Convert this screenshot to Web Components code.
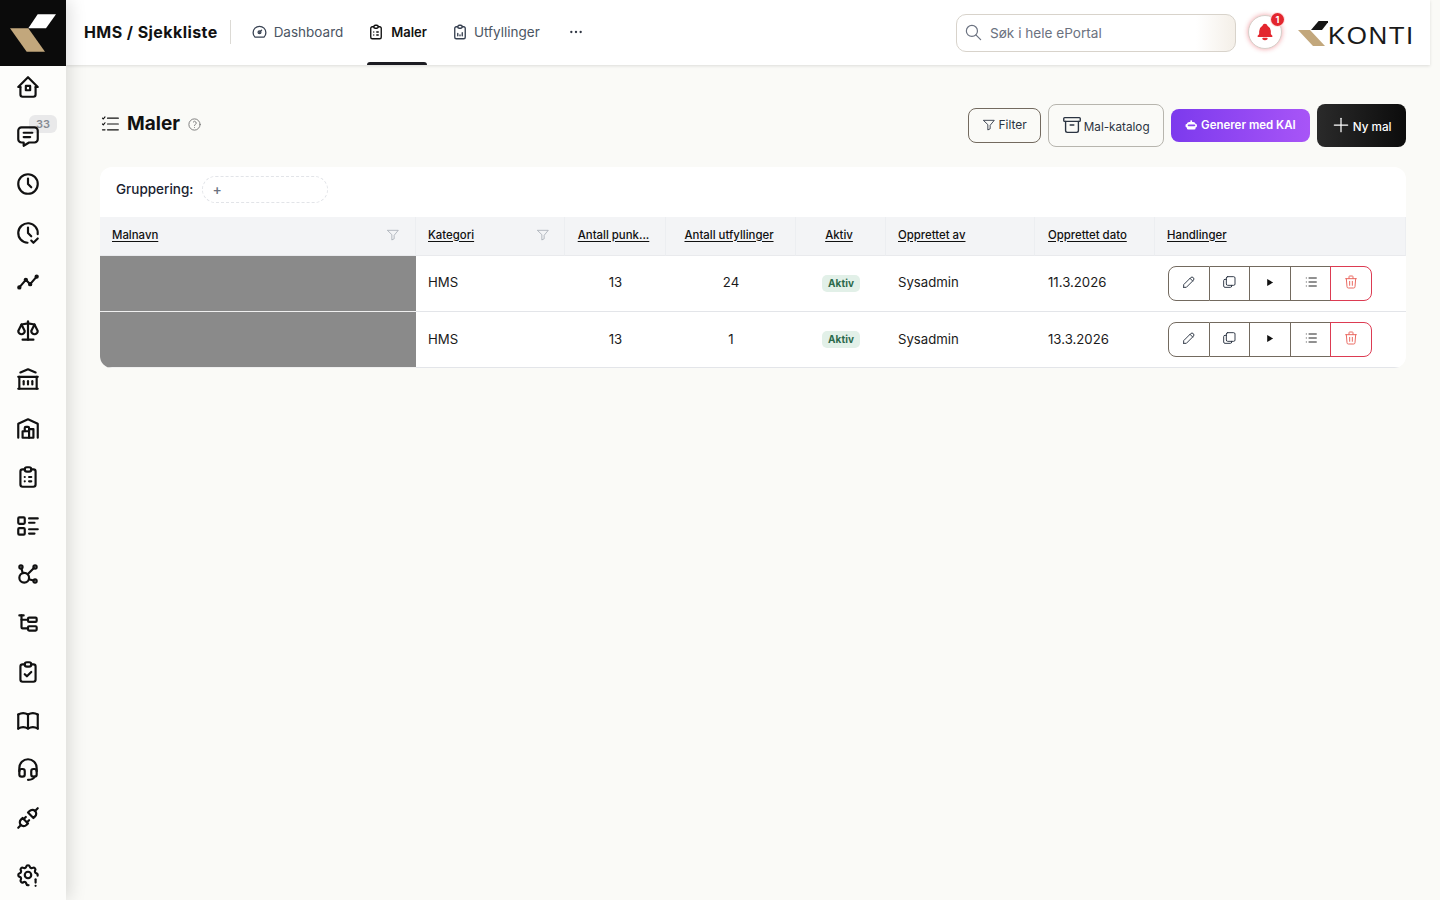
<!DOCTYPE html>
<html lang="no">
<head>
<meta charset="utf-8">
<title>Maler</title>
<style>
  html, body { margin: 0; height: 100%; }
  body { font-family: Inter, "Liberation Sans", sans-serif; background: #fafaf7; color: #111; overflow: hidden; }
  #app { display: flex; height: 900px; }
  #main { flex: 1; min-width: 0; display: flex; flex-direction: column; }
  #content { padding: 38px 34px 0; display: flex; flex-direction: column; }
</style>
</head>
<body>
<div id="app">
  <k-sidebar></k-sidebar>
  <div id="main">
    <k-topbar></k-topbar>
    <div id="content">
      <k-page-header></k-page-header>
      <k-table></k-table>
    </div>
  </div>
</div>

<script>
const clip = '<path d="M9 5h-2a2 2 0 0 0 -2 2v12a2 2 0 0 0 2 2h10a2 2 0 0 0 2 -2v-12a2 2 0 0 0 -2 -2h-2"/><path d="M9 5a2 2 0 0 1 2 -2h2a2 2 0 0 1 2 2a2 2 0 0 1 -2 2h-2a2 2 0 0 1 -2 -2z"/>';
const ICONS = {
  home: '<path d="M5 12h-2l9 -9l9 9h-2"/><path d="M5 12v7a2 2 0 0 0 2 2h10a2 2 0 0 0 2 -2v-7"/><rect x="10" y="11" width="4" height="4"/>',
  message: '<path d="M18 4a3 3 0 0 1 3 3v8a3 3 0 0 1 -3 3h-5l-5 3v-3h-2a3 3 0 0 1 -3 -3v-8a3 3 0 0 1 3 -3h12z"/><path d="M8 9h8"/><path d="M8 13h6"/>',
  clock: '<circle cx="12" cy="12" r="9"/><path d="M12 7v5l3 3"/>',
  clockcheck: '<path d="M20.942 13.021a9 9 0 1 0 -9.407 7.967"/><path d="M12 7v5l3 3"/><path d="M15 19l2 2l4 -4"/>',
  timeline: '<path d="M4 17l6 -7l4 4l6 -7"/><circle cx="4" cy="17" r="1"/><circle cx="10" cy="10" r="1"/><circle cx="14" cy="14" r="1"/><circle cx="20" cy="7" r="1"/>',
  scale: '<path d="M7 20h10"/><path d="M6 6l6 -1l6 1"/><path d="M12 3v17"/><path d="M9 12l-3 -6l-3 6a3 3 0 0 0 6 0"/><path d="M21 12l-3 -6l-3 6a3 3 0 0 0 6 0"/>',
  bank: '<path d="M3 21h18"/><path d="M3 10h18"/><path d="M5 6l7 -3l7 3"/><path d="M4 10v11"/><path d="M20 10v11"/><path d="M8 14v3"/><path d="M12 14v3"/><path d="M16 14v3"/>',
  warehouse: '<path d="M3 21v-13l9 -4l9 4v13"/><path d="M13 13h4v8h-10v-6h6"/><path d="M13 21v-9a1 1 0 0 0 -1 -1h-2a1 1 0 0 0 -1 1v3"/>',
  cliplist: clip + '<path d="M9 12h.01"/><path d="M13 12h2"/><path d="M9 16h.01"/><path d="M13 16h2"/>',
  clipcheck: clip + '<path d="M9 14l2 2l4 -4"/>',
  clipdata: clip + '<path d="M9 17v-3"/><path d="M12 17v-1"/><path d="M15 17v-4"/>',
  details: '<path d="M13 5h8"/><path d="M13 9h5"/><path d="M13 15h8"/><path d="M13 19h5"/><rect x="3" y="4" width="6" height="6" rx="1"/><rect x="3" y="14" width="6" height="6" rx="1"/>',
  affiliate: '<path d="M5.931 6.936l1.275 4.249m5.607 5.609l4.251 1.275"/><path d="M11.683 12.317l5.759 -5.759"/><circle cx="5.5" cy="5.5" r="1.5"/><circle cx="18.5" cy="5.5" r="1.5"/><circle cx="18.5" cy="18.5" r="1.5"/><circle cx="8.5" cy="15.5" r="4.5"/>',
  subtask: '<path d="M6 9h6"/><path d="M4 5h4"/><path d="M6 5v11a1 1 0 0 0 1 1h5"/><rect x="12" y="7" width="8" height="4" rx="1"/><rect x="12" y="15" width="8" height="4" rx="1"/>',
  book: '<path d="M3 19a9 9 0 0 1 9 0a9 9 0 0 1 9 0"/><path d="M3 6a9 9 0 0 1 9 0a9 9 0 0 1 9 0"/><path d="M3 6v13"/><path d="M12 6v13"/><path d="M21 6v13"/>',
  headset: '<path d="M4 14v-3a8 8 0 1 1 16 0v3"/><path d="M18 19c0 1.657 -2.686 3 -6 3"/><path d="M4 14a2 2 0 0 1 2 -2h1a2 2 0 0 1 2 2v3a2 2 0 0 1 -2 2h-1a2 2 0 0 1 -2 -2v-3z"/><path d="M15 14a2 2 0 0 1 2 -2h1a2 2 0 0 1 2 2v3a2 2 0 0 1 -2 2h-1a2 2 0 0 1 -2 -2v-3z"/>',
  plug: '<path d="M7 12l5 5l-1.5 1.5a3.536 3.536 0 1 1 -5 -5l1.5 -1.5z"/><path d="M17 12l-5 -5l1.5 -1.5a3.536 3.536 0 1 1 5 5l-1.5 1.5z"/><path d="M3 21l2.5 -2.5"/><path d="M18.5 5.5l2.5 -2.5"/><path d="M10 11l-2 2"/><path d="M13 14l-2 2"/>',
  settings: '<path d="M12.500 21.400c-.8 .2 -1.800 -.2 -2.175 -1.683a1.724 1.724 0 0 0 -2.573 -1.066c-1.543 .94 -3.31 -.826 -2.37 -2.37a1.724 1.724 0 0 0 -1.065 -2.572c-1.756 -.426 -1.756 -2.924 0 -3.35a1.724 1.724 0 0 0 1.066 -2.573c-.94 -1.543 .826 -3.31 2.37 -2.37c1 .608 2.296 .07 2.572 -1.065c.426 -1.756 2.924 -1.756 3.35 0a1.724 1.724 0 0 0 2.573 1.066c1.543 -.94 3.31 .826 2.37 2.37a1.724 1.724 0 0 0 1.065 2.572c1 .3 1.400 1.100 1.200 2.200"/><circle cx="12" cy="12" r="3"/><path d="M19 16v3"/><path d="M19 22v.01"/>',
  gauge: '<path d="M5.6 20a9 9 0 1 1 12.8 0z"/><path d="M12 13l3 -3"/><circle cx="12" cy="13" r="2"/>',
  dots: '<path d="M5 12h.01"/><path d="M12 12h.01"/><path d="M19 12h.01"/>',
  search: '<circle cx="10" cy="10" r="7"/><path d="M21 21l-6 -6"/>',
  checklist: '<path d="M9 5h13"/><path d="M9 12h13"/><path d="M9 19h13"/><path d="M3 5l1 1l2 -2.500"/><path d="M3 12l1 1l2 -2.500"/><path d="M3 19h3"/>',
  help: '<circle cx="12" cy="12" r="9"/><path d="M12 17v.01"/><path d="M12 13.500a1.500 1.500 0 0 1 1 -1.500a2.600 2.600 0 1 0 -3 -4"/>',
  filter: '<path d="M3 4h18l-7 8.500v6l-4 2v-8.500z"/>',
  archive: '<rect x="3" y="4" width="18" height="4" rx="1"/><path d="M5 8v10a2 2 0 0 0 2 2h10a2 2 0 0 0 2 -2v-10"/><path d="M10 12h4"/>',
  plus: '<path d="M12 4v16"/><path d="M4 12h16"/>',
  pencil: '<path d="M4 20h4l10.500 -10.500a2.828 2.828 0 1 0 -4 -4l-10.500 10.500v4"/><path d="M13.500 6.500l4 4"/>',
  copy: '<rect x="8" y="4" width="13" height="13" rx="2"/><path d="M16 17v1a2 2 0 0 1 -2 2h-8a2 2 0 0 1 -2 -2v-8a2 2 0 0 1 2 -2h2"/>',
  list: '<path d="M9 6h11"/><path d="M9 12h11"/><path d="M9 18h11"/><path d="M5 6v.01"/><path d="M5 12v.01"/><path d="M5 18v.01"/>',
  trash: '<path d="M4 7h16"/><path d="M10 11v6"/><path d="M14 11v6"/><path d="M5 7l1 12a2 2 0 0 0 2 2h8a2 2 0 0 0 2 -2l1 -12"/><path d="M9 7v-3a1 1 0 0 1 1 -1h4a1 1 0 0 1 1 1v3"/>',
  play: '<path d="M7 4.500v15l13 -7.500z" fill="currentColor" stroke="none"/>',
  bell: '<path fill="currentColor" stroke="none" d="M14.235 19c.865 0 1.322 1.024 .745 1.668a3.992 3.992 0 0 1 -2.98 1.332a3.992 3.992 0 0 1 -2.98 -1.332c-.552 -.616 -.158 -1.579 .634 -1.661l.11 -.006h4.471z"/><path fill="currentColor" stroke="none" d="M12 2c1.358 0 2.506 .903 2.875 2.141l.046 .171l.008 .043a8.013 8.013 0 0 1 4.024 6.069l.028 .287l.019 .289v2.931l.021 .136a3 3 0 0 0 1.143 1.847l.167 .117l.162 .099c.86 .487 .56 1.766 -.377 1.864l-.116 .006h-16c-1.028 0 -1.387 -1.364 -.493 -1.87a3 3 0 0 0 1.472 -2.063l.021 -.143l.001 -2.97a8 8 0 0 1 3.821 -6.454l.248 -.146l.01 -.043a3.003 3.003 0 0 1 2.562 -2.29l.182 -.017l.176 -.004z"/>',
  robot: '<path fill="currentColor" stroke="none" d="M12 2.500a1.300 1.300 0 0 1 1 2.100v.900h2a5 5 0 0 1 4.800 3.500h.2a2 2 0 0 1 2 2v2.500a2 2 0 0 1 -2 2h-.5v1.500a2.500 2.500 0 0 1 -2.500 2.500h-11a2.500 2.500 0 0 1 -2.500 -2.500v-1.500h-.5a2 2 0 0 1 -2 -2v-2.500a2 2 0 0 1 2 -2h.2a5 5 0 0 1 4.800 -3.500h2v-.9a1.300 1.300 0 0 1 1 -2.100z"/><rect x="5" y="10" width="14" height="3.500" rx="1.750" fill="#8a45f0" stroke="none"/>'
};

class KIcon extends HTMLElement {
  connectedCallback() {
    const size = this.getAttribute('size') || 24;
    const sw = this.getAttribute('stroke') || 2;
    this.attachShadow({ mode: 'open' }).innerHTML = `
      <style>
        :host { display: inline-flex; flex: none; width: ${size}px; height: ${size}px; }
        svg { display: block; width: 100%; height: 100%; }
      </style>
      <svg viewBox="0 0 24 24" fill="none" stroke="currentColor" stroke-width="${sw}" stroke-linecap="round" stroke-linejoin="round">${ICONS[this.getAttribute('name')] || ''}</svg>`;
  }
}
customElements.define('k-icon', KIcon);

class KSidebar extends HTMLElement {
  connectedCallback() {
    const names = ['home','message','clock','clockcheck','timeline','scale','bank','warehouse','cliplist','details','affiliate','subtask','clipcheck','book','headset','plug'];
    this.attachShadow({ mode: 'open' }).innerHTML = `
      <style>
        :host { display: flex; flex-direction: column; flex: none; width: 66px; height: 900px; background: #fdfdfb; box-shadow: 4px 0 16px rgba(0,0,0,.13); position: relative; z-index: 3; }
        .logo { height: 66px; background: #0b0b0b; flex: none; }
        .logo svg { display: block; }
        nav { display: flex; flex-direction: column; margin-top: -3.4px; flex: 1; }
        .item { height: 48.75px; flex: none; display: flex; align-items: center; justify-content: center; position: relative; color: #111; padding-right: 10px; box-sizing: border-box; }
        .badge { position: absolute; left: 29px; top: 3.5px; width: 28px; height: 18px; border-radius: 6px; background: #e9e9ea; color: #868b93; font-size: 11px; font-weight: 600; display: flex; align-items: center; justify-content: center; }
        .item k-icon { position: relative; z-index: 1; }
        .last { margin-top: auto; margin-bottom: 1px; }
      </style>
      <div class="logo"><svg width="66" height="66"><polygon points="37.700,14.300 56,14.300 46,28.300 28.300,28.300" fill="#fff"/><polygon points="10,28.300 28.300,28.300 45,51.700 26.700,51.700" fill="#c2a77c"/></svg></div>
      <nav>
        ${names.map((n, i) => `<div class="item">${i == 1 ? '<span class="badge">33</span>' : ''}<k-icon name="${n}" size="26"></k-icon></div>`).join('')}
        <div class="item last"><k-icon name="settings" size="26"></k-icon></div>
      </nav>`;
  }
}
customElements.define('k-sidebar', KSidebar);

class KTopbar extends HTMLElement {
  connectedCallback() {
    this.attachShadow({ mode: 'open' }).innerHTML = `
      <style>
        :host { display: flex; align-items: center; flex: none; height: 65px; margin-right: 10px; background: #fff; box-shadow: 0 1px 3px rgba(0,0,0,.12); padding-left: 18px; position: relative; z-index: 2; box-sizing: border-box; }
        h1 { margin: 0 0 2px; font-size: 16px; font-weight: 700; letter-spacing: .42px; white-space: nowrap; }
        .sep { width: 1px; height: 24px; background: #dcdad5; margin: 0 20px 2px 12px; }
        .nav { display: flex; align-self: stretch; align-items: center; }
        .tab { height: 100%; display: flex; align-items: center; gap: 6px; font-size: 13.5px; color: #4b5563; position: relative; margin-right: 24px; box-sizing: border-box; white-space: nowrap; padding-bottom: 2px; }
        .tab.data { gap: 5px; }
        .tab.on { color: #111; font-weight: 600; font-size: 13px; }
        .tab.on::after { content: ""; position: absolute; left: 0; right: 0; bottom: 0; height: 3px; background: #1c1c22; border-radius: 3px 3px 0 0; }
        .tab k-icon { color: #374151; }
        .tab.on k-icon { color: #111; }
        .more { color: #2f3542; margin: 0 0 2px 4px; }
        .right { margin-left: auto; display: flex; align-items: center; }
        .search { width: 280px; height: 38px; box-sizing: border-box; border: 1px solid #d8d3cb; border-radius: 10px; background: linear-gradient(90deg, #fff 86%, #f4efe8 100%); display: flex; align-items: center; padding-left: 7px; gap: 7px; color: #6b7280; font-size: 13.6px; }
        .bell { width: 34px; height: 34px; margin: 0 0 2px 12px; border-radius: 50%; background: #fff; border: 1px solid #d5d0ca; box-sizing: border-box; box-shadow: 0 0 5px rgba(227,40,50,.45); display: flex; align-items: center; justify-content: center; color: #e3262e; position: relative; }
        .dot { position: absolute; left: 22px; top: -3px; width: 13px; height: 13px; border-radius: 50%; background: #e3262e; color: #fff; font-size: 9px; font-weight: 700; display: flex; align-items: center; justify-content: center; box-shadow: 0 0 0 1px #fde0e0; }
        .brand { display: flex; align-items: center; margin-left: 16px; margin-right: 17px; height: 40px; }
        .brand svg { display: block; flex: none; }
        .brand span { font-family: "Liberation Sans", sans-serif; font-size: 24px; line-height: 24px; letter-spacing: 1.4px; color: #1a1a1a; margin: 7px 0 0 0; display: inline-block; transform: scaleX(1.08); transform-origin: left center; width: 85px; }
      </style>
      <h1>HMS / Sjekkliste</h1>
      <div class="sep"></div>
      <div class="nav">
        <div class="tab"><k-icon name="gauge" size="17" stroke="1.800"></k-icon>Dashboard</div>
        <div class="tab on"><k-icon name="cliplist" size="18" stroke="1.800"></k-icon>Maler</div>
        <div class="tab data"><k-icon name="clipdata" size="18" stroke="1.800"></k-icon>Utfyllinger</div>
        <k-icon class="more" name="dots" size="16" stroke="3.500"></k-icon>
      </div>
      <div class="right">
        <div class="search"><k-icon name="search" size="19" stroke="1.500"></k-icon><span>Søk i hele ePortal</span></div>
        <div class="bell"><k-icon name="bell" size="20"></k-icon><span class="dot">1</span></div>
        <div class="brand">
          <svg width="30" height="28" viewBox="0 0 30 28"><polygon points="13,11 20.600,2 31,2 24,11" fill="#161616"/><polygon points="0,11 12,11 27,27 15,27" fill="#c2a77c"/></svg>
          <span>KONTI</span>
        </div>
      </div>`;
  }
}
customElements.define('k-topbar', KTopbar);

class KBtn extends HTMLElement {
  connectedCallback() {
    this.attachShadow({ mode: 'open' }).innerHTML = `
      <style>
        :host { display: inline-flex; align-items: center; justify-content: center; box-sizing: border-box; border-radius: 8px; font-size: 12px; white-space: nowrap; }
        :host([kind=outline]) { height: 35px; border: 1px solid #736a5f; color: #2b3442; padding: 0 13px; gap: 2px; }
        :host([kind=soft]) { height: 43px; border: 1px solid #b7b5ae; color: #2b3442; padding: 0 13px 0 12px; gap: 1px; font-size: 11.7px; }
        :host([kind=ai]) { height: 33px; background: linear-gradient(90deg, #7c3aed, #a855f7); color: #fff; font-weight: 600; padding: 0 14.500px; gap: 3px; font-size: 11.5px; }
        :host([kind=dark]) { height: 43px; background: linear-gradient(90deg, #2a2a2a, #0c0c0c); color: #fff; font-weight: 500; padding: 0 14.500px 0 13.500px; gap: 2px; font-size: 11.7px; }
        .lab { display: inline-block; }
        :host([kind=outline]) .lab, :host([kind=outline]) ::slotted(k-icon) { margin-bottom: 1px; }
        :host([kind=soft]) .lab, :host([kind=dark]) .lab { padding-top: 4px; }
      </style>
      <slot name="icon"></slot><span class="lab"><slot></slot></span>`;
  }
}
customElements.define('k-btn', KBtn);

class KPageHeader extends HTMLElement {
  connectedCallback() {
    this.attachShadow({ mode: 'open' }).innerHTML = `
      <style>
        :host { display: flex; align-items: center; height: 44px; margin-bottom: 20px; }
        .title { display: flex; align-items: center; margin-bottom: 2px; }
        h2 { margin: 0 7px; font-size: 19px; line-height: 24px; font-weight: 700; color: #111; }
        .help { color: #777; }
        .actions { margin-left: auto; display: flex; align-items: center; gap: 7px; }
      </style>
      <div class="title">
        <k-icon name="checklist" size="20" stroke="1.400"></k-icon>
        <h2>Maler</h2>
        <k-icon class="help" name="help" size="15" stroke="1.500"></k-icon>
      </div>
      <div class="actions">
        <k-btn kind="outline"><k-icon slot="icon" name="filter" size="14" stroke="1.500"></k-icon>Filter</k-btn>
        <k-btn kind="soft"><k-icon slot="icon" name="archive" size="22" stroke="1.500"></k-icon>Mal-katalog</k-btn>
        <k-btn kind="ai"><k-icon slot="icon" name="robot" size="13"></k-icon>Generer med KAI</k-btn>
        <k-btn kind="dark"><k-icon slot="icon" name="plus" size="20" stroke="1.500"></k-icon>Ny mal</k-btn>
      </div>`;
  }
}
customElements.define('k-page-header', KPageHeader);

class KActions extends HTMLElement {
  connectedCallback() {
    const b = ['pencil', 'copy', 'play', 'list'];
    this.attachShadow({ mode: 'open' }).innerHTML = `
      <style>
        :host { display: flex; height: 35px; width: 204px; box-sizing: border-box; }
        span { flex: 1; display: flex; align-items: center; justify-content: center; border: 1px solid #736a5f; border-left: 0; color: #27303f; padding-bottom: 3px; box-sizing: border-box; }
        span:first-of-type { border-left: 1px solid #736a5f; border-radius: 8px 0 0 8px; }
        span.del { border: 1px solid #dc3b52; border-radius: 0 8px 8px 0; color: #ea6a62; margin-left: -1px; }
        .play, .list { color: #111; }
      </style>
      ${b.map(n => `<span class="${n}"><k-icon name="${n}" size="${n == 'play' ? 11 : 16}" stroke="1.400"></k-icon></span>`).join('')}
      <span class="del"><k-icon name="trash" size="16" stroke="1.500"></k-icon></span>`;
  }
}
customElements.define('k-actions', KActions);

class KTable extends HTMLElement {
  connectedCallback() {
    const heads = [
      ['Malnavn', '', 1], ['Kategori', 'kat', 1], ['Antall punk...', 'c'], ['Antall utfyllinger', 'c'],
      ['Aktiv', 'c'], ['Opprettet av', ''], ['Opprettet dato', ''], ['Handlinger', '']
    ];
    const rows = [
      ['HMS', '13', '24', 'Sysadmin', '11.3.2026'],
      ['HMS', '13', '1', 'Sysadmin', '13.3.2026']
    ];
    this.attachShadow({ mode: 'open' }).innerHTML = `
      <style>
        :host { display: block; background: #fff; border-radius: 12px; overflow: hidden; font-size: 13.2px; color: #1a1a1a; }
        .group { height: 50px; display: flex; align-items: center; padding-left: 16px; gap: 9px; font-size: 13.5px; font-weight: 500; color: #1a2230; box-sizing: border-box; padding-bottom: 5px; }
        .group b { font-weight: 500; margin-bottom: 2px; }
        .drop { width: 126px; height: 27px; box-sizing: border-box; border: 1px dashed #e2e4e8; border-radius: 14px; display: flex; align-items: center; padding: 0 0 1px 9px; color: #6b7280; font-size: 14px; }
        .grid { display: grid; grid-template-columns: 316px 149px 101px 130px 90px 149px 120px 1fr; }
        .th { height: 39px; background: #f3f4f6; display: flex; align-items: center; padding: 0 12px 3px; font-size: 11.4px; font-weight: 500; color: #111; border-right: 1px solid #eceef1; border-bottom: 1px solid #e9eaed; box-sizing: border-box; position: relative; }
        .th:last-child { border-right: 0; padding-left: 15px; }
        .th:nth-child(7) { padding-left: 13px; }
        .th u { text-underline-offset: 2px; white-space: nowrap; }
        .th.c { justify-content: center; padding-right: 15px; }
        .th k-icon { margin-left: auto; margin-right: 3px; color: #9aa1ab; }
        .th.kat k-icon { margin-right: 2px; }
        .td { height: 56px; display: flex; align-items: center; padding: 0 12px 3px; border-bottom: 1px solid #e3e5e9; box-sizing: border-box; white-space: nowrap; }
        .td.second { padding-bottom: 2px; }
        .td.c { justify-content: center; }
        .td.p { padding-left: 13px; }
        .td.flat { padding-bottom: 0; }
        .blk { padding: 0; background: #8a8a8a; border-bottom: 1px solid #f0f0f0; }
        .pill { height: 17px; width: 38px; border-radius: 5px; background: #e2f0e8; color: #2c6a4c; font-size: 10px; font-weight: 700; display: flex; align-items: center; justify-content: center; letter-spacing: .1px; margin: 0 0 1px 0; }
      </style>
      <div class="group"><b>Gruppering:</b> <div class="drop">+</div></div>
      <div class="grid">
        ${heads.map(h => `<div class="th ${h[1]}"><u>${h[0]}</u>${h[2] ? '<k-icon name="filter" size="14" stroke="1.200"></k-icon>' : ''}</div>`).join('')}
        ${rows.map((r, i) => {
          const s = i ? ' second' : '';
          return `
          <div class="td blk"></div>
          <div class="td${s}">${r[0]}</div>
          <div class="td c${s}">${r[1]}</div>
          <div class="td c${s}">${r[2]}</div>
          <div class="td c flat"><span class="pill">Aktiv</span></div>
          <div class="td${s}">${r[3]}</div>
          <div class="td p${s}">${r[4]}</div>
          <div class="td p flat"><k-actions></k-actions></div>`;
        }).join('')}
      </div>`;
  }
}
customElements.define('k-table', KTable);
</script>
</body>
</html>
